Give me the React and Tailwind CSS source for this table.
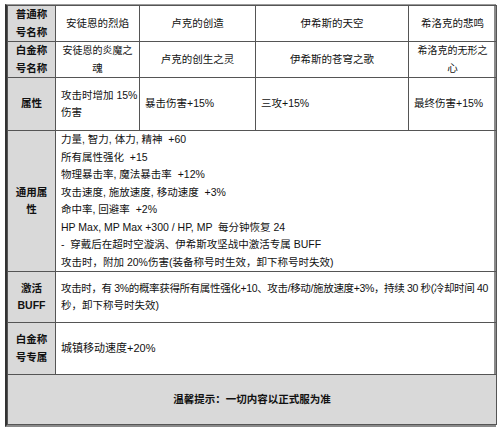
import React from "react";

const font = { fontFamily: '"Liberation Sans", "Noto Sans CJK SC", sans-serif' };

function Label({ children }) {
  return (
    <td className="bg-[#d9d9d9] border border-[#555] px-0 py-0 text-center align-middle font-bold whitespace-nowrap">
      {children}
    </td>
  );
}

function Cell({ children, center, colSpan }) {
  return (
    <td
      colSpan={colSpan}
      className={`border border-[#555] py-0 align-middle whitespace-nowrap ${
        center ? "text-center px-0" : "text-left px-[5px]"
      }`}
    >
      {children}
    </td>
  );
}

export default function App() {
  return (
    <div className="w-[500px] h-[428px] bg-white overflow-hidden" style={font}>
      <div className="ml-[5px] mt-[4px] w-[491px] border-l-2 border-l-[#333] border-r-2 border-r-[#8a8a8a] border-b-2 border-b-[#8a8a8a] border-t border-t-[#9a9a9a]">
        <table className="table-fixed border-collapse w-full text-[10.5px] leading-[17.5px] text-[#111]">
          <colgroup>
            <col className="w-[48px]" />
            <col className="w-[84px]" />
            <col className="w-[116px]" />
            <col className="w-[153px]" />
            <col className="w-[88px]" />
          </colgroup>
          <tbody>
            <tr className="h-[36px]">
              <Label>
                普通称
                <br />
                号名称
              </Label>
              <Cell center>安徒恩的烈焰</Cell>
              <Cell center>卢克的创造</Cell>
              <Cell center>伊希斯的天空</Cell>
              <Cell center>希洛克的悲鸣</Cell>
            </tr>
            <tr className="h-[35px]">
              <Label>
                白金称
                <br />
                号名称
              </Label>
              <Cell center>
                <div className="text-[10px] text-center">安徒恩的炎魔之</div>
                <div className="text-center">魂</div>
              </Cell>
              <Cell center>卢克的创生之灵</Cell>
              <Cell center>伊希斯的苍穹之歌</Cell>
              <Cell center>
                <div className="text-[10px] text-center">希洛克的无形之</div>
                <div className="text-center">心</div>
              </Cell>
            </tr>
            <tr className="h-[53px]">
              <Label>属性</Label>
              <Cell>
                攻击时增加 15%
                <br />
                伤害
              </Cell>
              <Cell>暴击伤害+15%</Cell>
              <Cell>三攻+15%</Cell>
              <Cell>最终伤害+15%</Cell>
            </tr>
            <tr className="h-[138px]">
              <Label>
                通用属
                <br />性
              </Label>
              <Cell colSpan={4}>
                <div>力量, 智力, 体力, 精神 &nbsp;+60</div>
                <div>所有属性强化 &nbsp;+15</div>
                <div>物理暴击率, 魔法暴击率 &nbsp;+12%</div>
                <div>攻击速度, 施放速度, 移动速度 &nbsp;+3%</div>
                <div>命中率, 回避率 &nbsp;+2%</div>
                <div>HP Max, MP Max +300 / HP, MP &nbsp;每分钟恢复 24</div>
                <div>- &nbsp;穿戴后在超时空漩涡、伊希斯攻坚战中激活专属 BUFF</div>
                <div>攻击时，附加 20%伤害(装备称号时生效，卸下称号时失效)</div>
              </Cell>
            </tr>
            <tr className="h-[51px]">
              <Label>
                激活
                <br />
                BUFF
              </Label>
              <Cell colSpan={4}>
                <span className="tracking-[-0.35px]">
                  攻击时，有 3%的概率获得所有属性强化+10、攻击/移动/施放速度+3%，持续 30 秒(冷却时间 40
                </span>
                <br />
                秒，卸下称号时失效)
              </Cell>
            </tr>
            <tr className="h-[52px]">
              <Label>
                白金称
                <br />
                号专属
              </Label>
              <Cell colSpan={4}>
                <span className="text-[11px]">城镇移动速度+20%</span>
              </Cell>
            </tr>
            <tr className="h-[50px] bg-[#d9d9d9]">
              <td colSpan={5} className="border border-[#555] py-0 text-center align-middle font-bold">
                温馨提示：一切内容以正式服为准
              </td>
            </tr>
          </tbody>
        </table>
      </div>
    </div>
  );
}
